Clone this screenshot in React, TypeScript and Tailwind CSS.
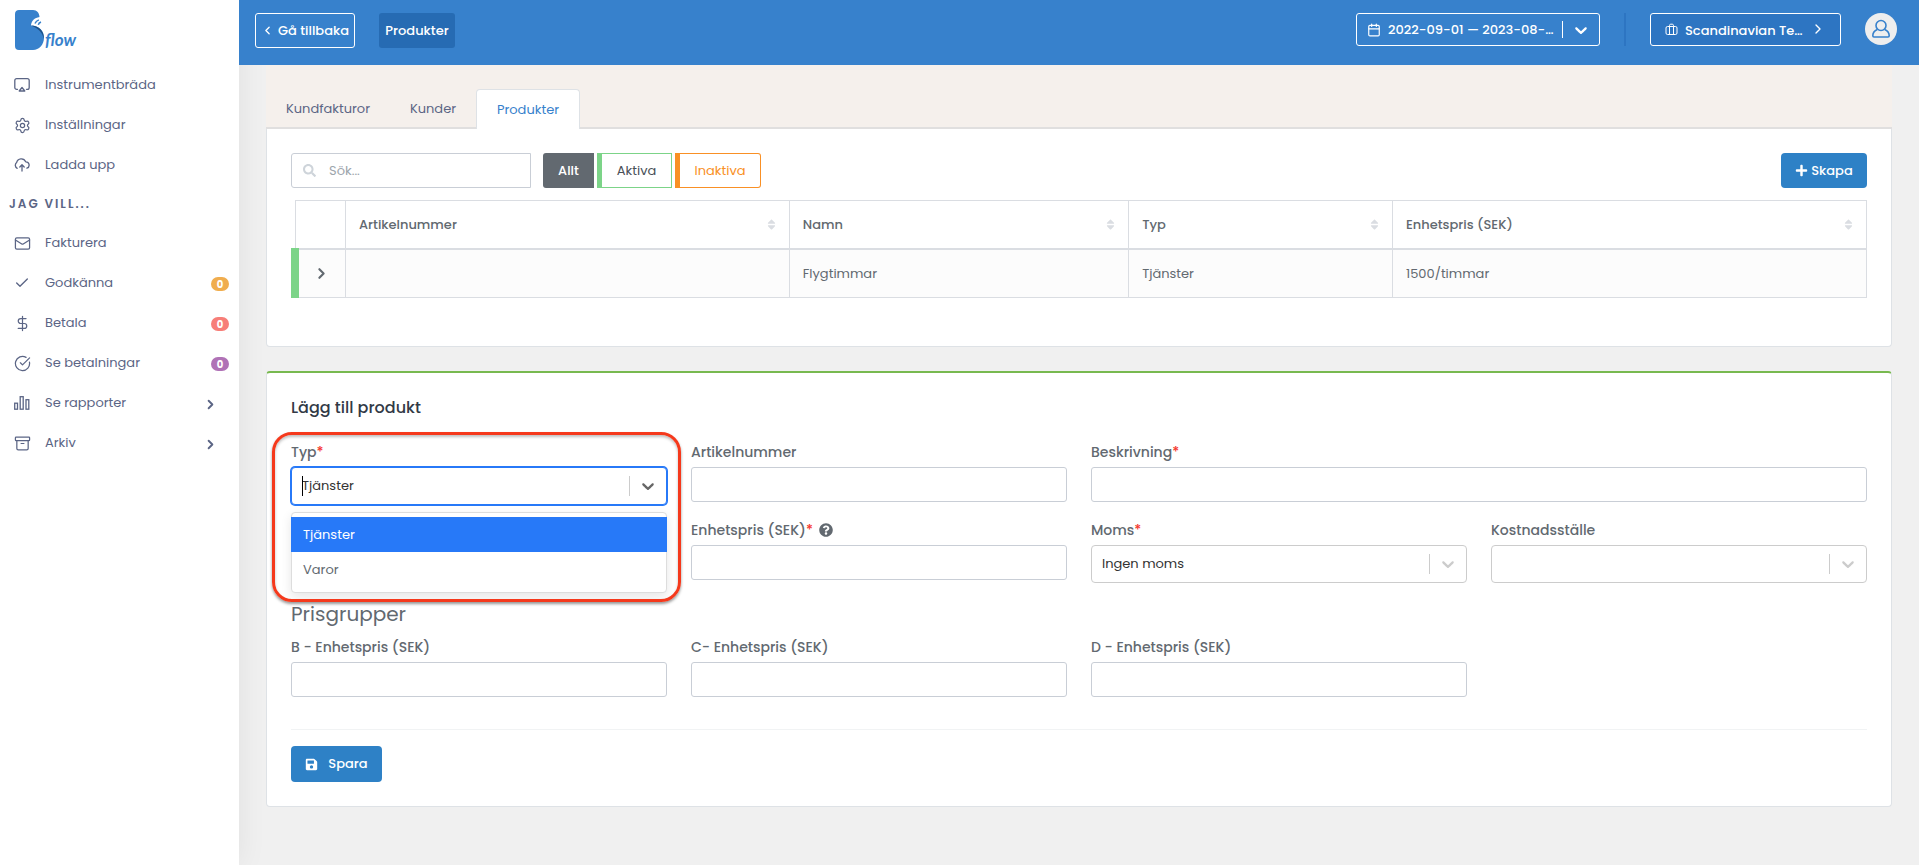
import type { ReactNode } from "react";
import { Archive, Calendar, Check, ChevronLeft, ChevronRight, CircleCheckBig, DollarSign, Mail, Settings } from "lucide-react";
import { FaPlus, FaQuestionCircle, FaSave, FaSearch, FaSort } from "react-icons/fa";

const input = "block h-[35px] w-full rounded-[3px] border border-[#c9ced6] bg-white px-3 text-[13px] outline-none"

function Bars() {
    return (
        <svg viewBox="0 0 18 16" className="h-4 w-[18px]" fill="none" stroke="currentColor" strokeWidth="1.3">
            <rect x="1.7" y="8.2" width="2.8" height="6" />
            <rect x="7.2" y="1.7" width="3" height="12.5" />
            <rect x="13" y="4.7" width="2.8" height="9.5" />
        </svg>
    )
}

function Screen() {
    return (
        <svg viewBox="0 0 16 16" className="size-4" fill="none" stroke="currentColor" strokeWidth="1.3" strokeLinecap="round" strokeLinejoin="round">
            <path d="M3.5 12.3H2.7c-1 0-1.9-.8-1.9-1.9V3.6c0-1 .8-1.9 1.9-1.9h10.6c1 0 1.9.8 1.9 1.9v6.8c0 1-.8 1.9-1.9 1.9h-.8" />
            <path d="M8 10.5 5.2 14h5.6L8 10.5Z" />
        </svg>
    )
}

function Upload() {
    return (
        <svg viewBox="0 0 16 16" className="size-4" fill="none" stroke="currentColor" strokeWidth="1.3" strokeLinecap="round" strokeLinejoin="round">
            <path d="M3.2 11.3A3.4 3.4 0 0 1 2.6 5.6 4.8 4.8 0 0 1 11.7 4.8 3.3 3.3 0 0 1 12.9 11.2" />
            <path d="M8 14V8M5.8 10 8 7.8 10.2 10" />
        </svg>
    )
}

function Suitcase() {
    return (
        <svg viewBox="0 0 13 13" className="size-[13px] shrink-0" fill="none" stroke="currentColor" strokeWidth="1">
            <rect x="1" y="3.5" width="11" height="8" rx="1.5" />
            <path d="M4.5 11.5V2.5c0-.8.5-1.3 1.2-1.3h1.6c.7 0 1.2.5 1.2 1.3v9" />
        </svg>
    )
}

function User() {
    return (
        <svg viewBox="0 0 20 20" className="size-5" fill="none" stroke="currentColor" strokeWidth="1.6" strokeLinejoin="round">
            <circle cx="10" cy="6.5" r="5" />
            <path d="M6.3 10.6C3.5 11.8 1.8 14 1.8 16.8c0 .8.5 1.2 1.2 1.2h14c.7 0 1.2-.4 1.2-1.2 0-2.8-1.7-5-4.5-6.2" />
        </svg>
    )
}

function Chevron() {
    return (
        <svg viewBox="0 0 20 20" className="size-5 shrink-0" fill="currentColor">
            <path d="M4.516 7.548c0.436-0.446 1.043-0.481 1.576 0l3.908 3.747 3.908-3.747c0.533-0.481 1.141-0.446 1.574 0 0.436 0.445 0.408 1.197 0 1.615-0.406 0.418-4.695 4.502-4.695 4.502-0.217 0.223-0.502 0.335-0.787 0.335s-0.57-0.112-0.789-0.335c0 0-4.287-4.084-4.695-4.502s-0.436-1.17 0-1.615z" />
        </svg>
    )
}

function Logo() {
    return (
        <svg viewBox="0 0 64 44" className="h-11 w-16" role="img" aria-label="Bflow">
            <path d="M4 2h14c4 0 6.3 3 6.5 7-5 .8-8.2 4-8.5 8.5 8 0 13 5 13 12C29 37 24 42 18 42H4c-2.7 0-4-1.6-4-4V6c0-2.6 1.6-4 4-4Z" fill="#3781cc" />
            <path d="M16 17.5c7.5 0 13.5 5.5 12.8 13.5-1.3-6.5-5-10.5-12.8-13.5Z" fill="#1d5085" />
            <path d="M20 15.5c.6-1.6 1.8-2.8 3.8-3.6M23.3 16.8c.3-1.3 1.2-2.2 2.7-2.8" fill="none" stroke="#3781cc" strokeWidth="1.5" />
            <text x="30" y="38" fill="#3781cc" fontSize="17" fontWeight="700" fontStyle="italic" fontFamily="Lato, sans-serif">flow</text>
        </svg>
    )
}

function Item({ icon, text, badge, arrow }: { icon: ReactNode, text: string, badge?: string, arrow?: boolean }) {
    return (
        <li>
            <a href="#" className="flex h-10 items-center pl-[13px] pr-2.5">
                <span className="flex w-[18px] justify-center">{icon}</span>
                <span className="ml-3.5 flex-1">{text}</span>
                {badge && <span className={`mt-0.5 flex h-3.5 w-[18px] items-center justify-center rounded-full text-[10px] font-bold text-white ${badge}`}>0</span>}
                {arrow && <ChevronRight size={15} strokeWidth={3} className="mr-[11px] mt-0.5" />}
            </a>
        </li>
    )
}

function Label({ id, text, required, help }: { id: string, text: string, required?: boolean, help?: boolean }) {
    return (
        <label htmlFor={id} className="mb-[5px] flex h-5 items-center text-sm font-medium">
            {text}{required && <span className="text-[#f5362c]">*</span>}
            {help && <FaQuestionCircle className="ml-1.5 size-3.5" />}
        </label>
    )
}

function Field({ id, text, required, help }: { id: string, text: string, required?: boolean, help?: boolean }) {
    return (
        <div>
            <Label id={id} text={text} required={required} help={help} />
            <input id={id} className={input} />
        </div>
    )
}

function Arrow({ color }: { color: string }) {
    return (
        <span className={`pointer-events-none absolute inset-y-0 right-0 flex items-center ${color}`}>
            <span className="mr-2 h-5 w-px bg-[#cccccc]" />
            <Chevron />
            <span className="w-[9px]" />
        </span>
    )
}

function Select({ id, text, required, value }: { id: string, text: string, required?: boolean, value: string }) {
    return (
        <div>
            <Label id={id} text={text} required={required} />
            <div className="relative">
                <select id={id} className="block h-[38px] w-full appearance-none rounded border border-[#cccccc] bg-white px-2.5 text-[13px] text-[#333333]">
                    <option>{value}</option>
                </select>
                <Arrow color="text-[#cccccc]" />
            </div>
        </div>
    )
}

function Sidebar() {
    return (
        <aside className="relative w-[239px] shrink-0 bg-white text-[13px] text-[#5b6585] shadow-[0_0_28px_rgba(0,30,20,0.07)]">
            <div className="h-[65px] pl-[15px] pt-2">
                <Logo />
            </div>
            <nav>
                <ul>
                    <Item icon={<Screen />} text="Instrumentbräda" />
                    <Item icon={<Settings size={17} strokeWidth={1.75} />} text="Inställningar" />
                    <Item icon={<Upload />} text="Ladda upp" />
                </ul>
                <h2 className="flex h-[38px] items-center pl-[9px] text-xs font-semibold tracking-[2px]">JAG VILL...</h2>
                <ul>
                    <Item icon={<Mail size={17} strokeWidth={1.75} />} text="Fakturera" />
                    <Item icon={<Check size={16} strokeWidth={2} />} text="Godkänna" badge="bg-[#f0ad4e]" />
                    <Item icon={<DollarSign size={17} strokeWidth={1.75} />} text="Betala" badge="bg-[#f77e78]" />
                    <Item icon={<CircleCheckBig size={17} strokeWidth={1.75} />} text="Se betalningar" badge="bg-[#b072b6]" />
                    <Item icon={<Bars />} text="Se rapporter" arrow />
                    <Item icon={<Archive size={17} strokeWidth={1.75} />} text="Arkiv" arrow />
                </ul>
            </nav>
        </aside>
    )
}

function Header() {
    return (
        <header className="relative flex h-[65px] items-start bg-[#3781cc] pl-4 pr-[22px] pt-[13px] text-[13px] font-medium text-white">
            <button className="flex h-[35px] w-[100px] items-center justify-center gap-1 whitespace-nowrap rounded-[3px] border border-white">
                <ChevronLeft size={13} strokeWidth={2.5} /> Gå tillbaka
            </button>
            <button className="ml-6 h-[35px] w-[76px] rounded-[3px] bg-[#266bb3]">Produkter</button>
            <button className="ml-auto flex h-[33px] w-[244px] items-center whitespace-nowrap rounded-[3px] border border-white pl-2.5">
                <Calendar size={14} strokeWidth={2} className="mr-[7px] shrink-0" />
                <span>2022-09-01 — 2023-08-…</span>
                <span className="ml-auto h-[17px] w-px bg-white" />
                <span className="px-2"><Chevron /></span>
            </button>
            <span className="mx-6 h-[33px] w-[2px] bg-[#2d75c2]" />
            <button className="flex h-[33px] w-[191px] items-center whitespace-nowrap rounded-[3px] border border-white bg-[#2d75c2] px-3.5">
                <Suitcase />
                <span className="ml-[7px] pt-0.5">Scandinavian Te…</span>
                <ChevronRight size={16} className="mb-0.5 ml-auto" />
            </button>
            <button aria-label="Konto" className="ml-6 flex size-8 items-center justify-center rounded-full bg-[#eeeeee] text-[#3781cc]">
                <User />
            </button>
        </header>
    )
}

function Products() {
    return (
        <section>
            <nav className="flex h-16 items-end border-b-2 border-[#e0dfdf] bg-[#f5f0ec] text-[13px] text-[#5b6585]">
                <a href="#" className="flex h-9 w-[124px] items-center justify-center">Kundfakturor</a>
                <a href="#" className="flex h-9 w-[86px] items-center justify-center">Kunder</a>
                <a href="#" className="-mb-0.5 flex h-10 w-[104px] items-center justify-center rounded-t border border-b-0 border-[#dee2e6] bg-white text-[#3781cc]">Produkter</a>
            </nav>
            <div className="rounded-b border border-t-0 border-[#dee2e6] bg-white px-6 pb-12 pt-6 text-[13px]">
                <div className="flex h-[35px]">
                    <div className="relative w-60">
                        <FaSearch className="absolute left-3 top-[11px] size-[13px] text-[#ced4da]" />
                        <input aria-label="Sök" placeholder="Sök..." className="h-full w-full rounded-l-[3px] border border-[#c9ced6] pl-[37px] outline-none placeholder:text-[#9da5ac]" />
                    </div>
                    <button className="ml-3 w-[51px] rounded-l-[3px] bg-[#626970] font-medium text-white">Allt</button>
                    <button className="ml-[3px] w-[75px] border border-l-[5px] border-[#7cd488] text-[#495057]">Aktiva</button>
                    <button className="ml-[3px] w-[86px] rounded-r-[3px] border border-l-[5px] border-[#f99025] text-[#f99025]">Inaktiva</button>
                    <button className="ml-auto flex w-[86px] items-center justify-center gap-[3px] rounded-sm bg-[#2e81c6] font-medium text-white">
                        <FaPlus className="size-[13px]" /> Skapa
                    </button>
                </div>
                <div className="relative ml-1 mt-3">
                    <table className="w-full table-fixed border-collapse text-left text-[#626970]">
                        <colgroup>
                            <col className="w-[50px]" />
                            <col className="w-[28.25%]" />
                            <col className="w-[21.6%]" />
                            <col className="w-[16.8%]" />
                            <col />
                        </colgroup>
                        <thead>
                            <tr className="h-12 border border-b-2 border-[#dadde2]">
                                <th className="border-r border-[#dadde2]"></th>
                                {["Artikelnummer", "Namn", "Typ", "Enhetspris (SEK)"].map((name) => {
                                    return (
                                        <th key={name} className="border-r border-[#dadde2] pl-[13px] pr-[11px] font-medium">
                                            <span className="flex items-center justify-between">
                                                {name}
                                                <FaSort className="size-[13px] text-[#dadde2]" />
                                            </span>
                                        </th>
                                    )
                                })}
                            </tr>
                        </thead>
                        <tbody>
                            <tr className="h-[49px] border border-[#dadde2] bg-[#fcfcfc]">
                                <td className="border-r border-[#dadde2]">
                                    <button aria-label="Visa" className="flex w-full justify-center pl-0.5">
                                        <ChevronRight size={17} strokeWidth={3} />
                                    </button>
                                </td>
                                <td className="border-r border-[#dadde2] px-[13px]"></td>
                                <td className="border-r border-[#dadde2] px-[13px]">Flygtimmar</td>
                                <td className="border-r border-[#dadde2] px-[13px]">Tjänster</td>
                                <td className="px-[13px]">1500/timmar</td>
                            </tr>
                        </tbody>
                    </table>
                    <span className="absolute -left-1 bottom-0 h-[50px] w-2 bg-[#7cd488]" />
                </div>
            </div>
        </section>
    )
}

function TypeSelect() {
    return (
        <div className="relative z-10">
            <Label id="typ" text="Typ" required />
            <div className="relative">
                <input id="typ" role="combobox" aria-expanded="true" aria-controls="typ-list" defaultValue="Tjänster" className="block h-[38px] w-full rounded border border-[#2779f8] bg-white px-2.5 text-[13px] text-[#333333] outline-none ring-1 ring-[#2779f8]" />
                <span className="absolute left-[11px] top-[9px] h-5 w-px bg-black" />
                <Arrow color="text-[#666666]" />
            </div>
            <ul id="typ-list" role="listbox" className="absolute inset-x-0 top-[70px] rounded border border-[#dddddd] bg-white pb-[5px] pt-1 text-[13px] shadow-[0_4px_11px_rgba(0,0,0,0.10)]">
                <li role="option" aria-selected="true" className="-mx-px flex h-[35px] items-center bg-[#2779f8] px-3 text-white">Tjänster</li>
                <li role="option" aria-selected="false" className="flex h-[35px] items-center px-[11px]">Varor</li>
            </ul>
            <div className="pointer-events-none absolute -left-[19px] -right-3.5 -top-2.5 h-[170px] rounded-[20px] border-3 border-[#f5391c] shadow-[0_2px_3px_rgba(0,0,0,0.4),inset_0_2px_3px_rgba(0,0,0,0.25)]" />
        </div>
    )
}

function ProductForm() {
    return (
        <form className="mt-6 rounded border border-t-2 border-[#dee2e6] border-t-[#78b94f] bg-white px-6 pb-6 text-[#626970]">
            <h3 className="pb-[22px] pt-[23px] text-base font-medium leading-6 text-[#323a46]">Lägg till produkt</h3>
            <div className="grid grid-cols-4 gap-x-6">
                <TypeSelect />
                <Field id="artikel" text="Artikelnummer" />
                <div className="col-span-2">
                    <Field id="beskrivning" text="Beskrivning" required />
                </div>
            </div>
            <div className="mt-[15px] grid grid-cols-4 gap-x-6">
                <div className="col-start-2">
                    <Field id="pris" text="Enhetspris (SEK)" required help />
                </div>
                <Select id="moms" text="Moms" required value="Ingen moms" />
                <Select id="kostnad" text="Kostnadsställe" value="" />
            </div>
            <h4 className="mt-[17px] text-xl leading-7">Prisgrupper</h4>
            <div className="mt-[9px] grid grid-cols-4 gap-x-6">
                <Field id="pris-b" text="B - Enhetspris (SEK)" />
                <Field id="pris-c" text="C- Enhetspris (SEK)" />
                <Field id="pris-d" text="D - Enhetspris (SEK)" />
            </div>
            <hr className="mb-4 mt-8 border-[#f1f3f4]" />
            <button type="button" className="flex h-9 w-[91px] items-center justify-center gap-2.5 rounded-sm bg-[#2e81c6] text-[13px] font-medium text-white">
                <FaSave className="size-[13px]" /> Spara
            </button>
        </form>
    )
}

export default function App() {
    return (
        <div className="flex min-h-screen bg-[#f0f0f0] font-['Poppins','Inter',sans-serif]">
            <Sidebar />
            <div className="min-w-0 flex-1">
                <Header />
                <main className="px-[27px]">
                    <Products />
                    <ProductForm />
                </main>
            </div>
        </div>
    );
}
